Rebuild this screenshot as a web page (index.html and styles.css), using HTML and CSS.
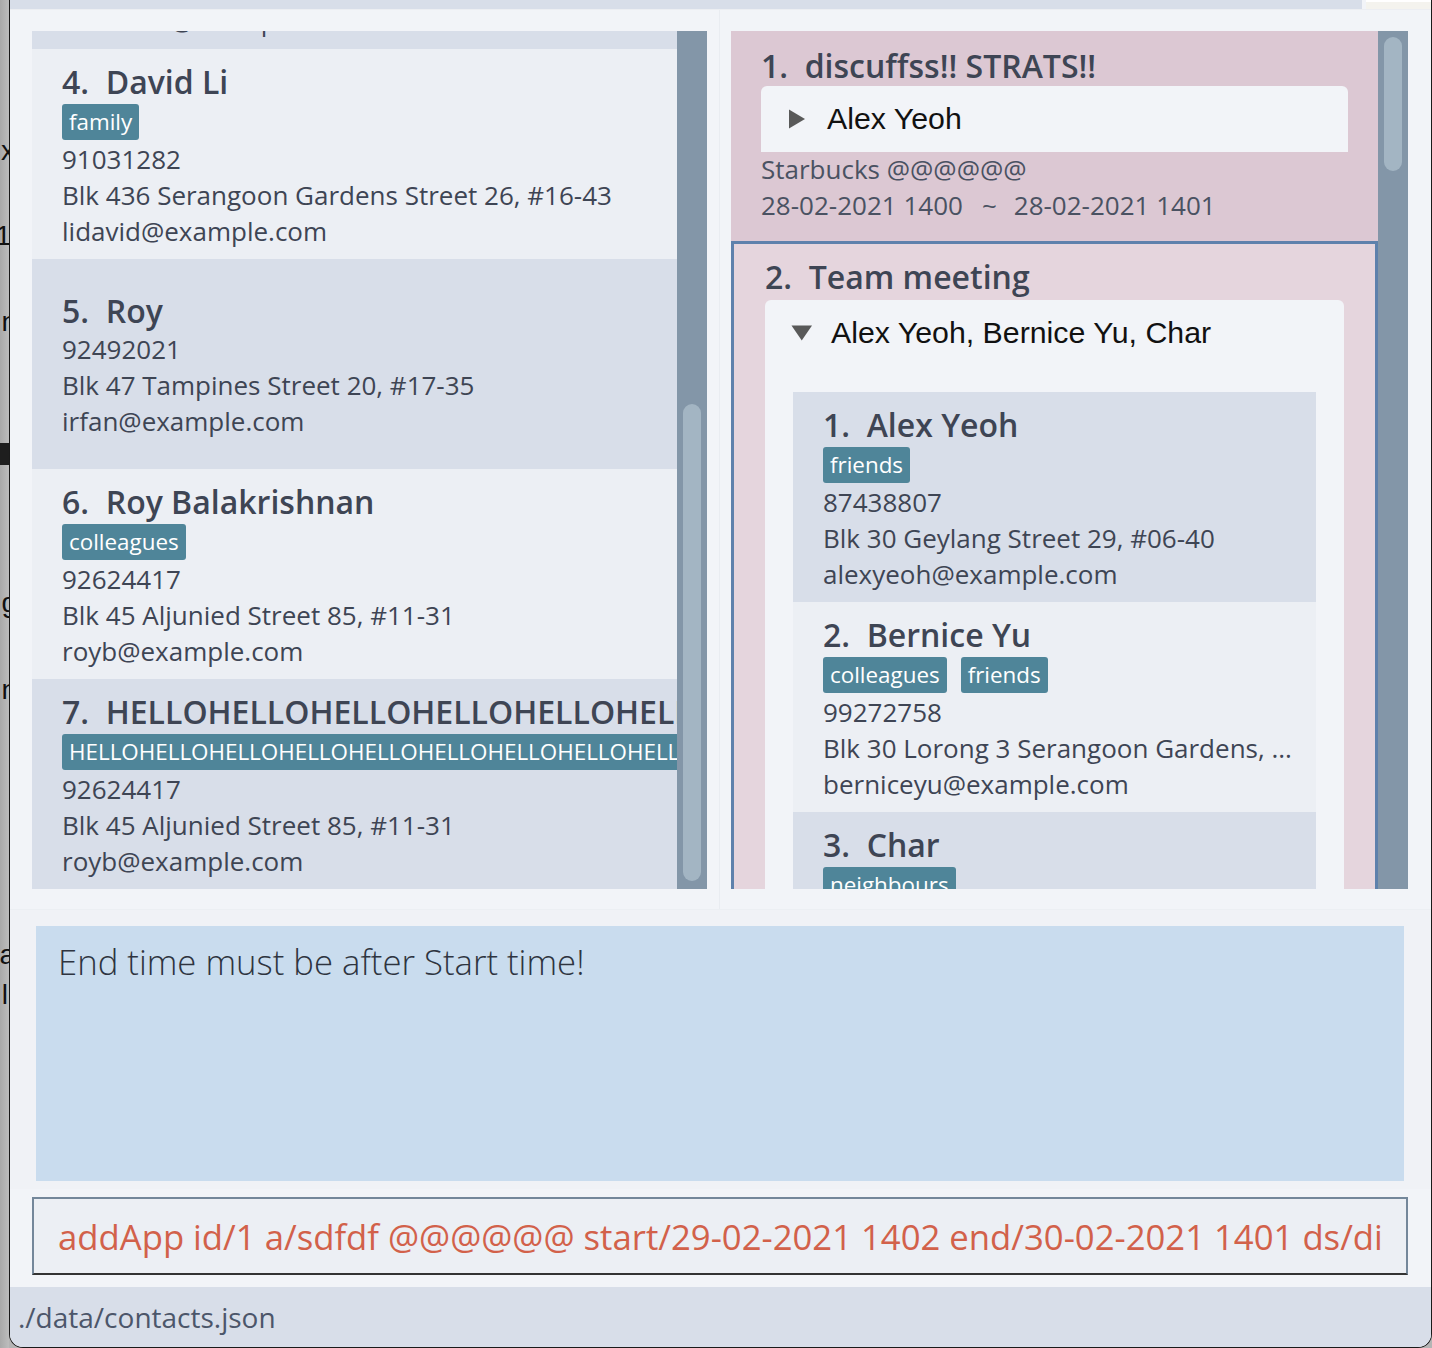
FILE: index.html
```html
<!DOCTYPE html>
<html lang="en">
<head>
<meta charset="utf-8">
<title>Address Book</title>
<link rel="stylesheet" href="styles.css">
</head>
<body>
<div class="desktop">
  <div class="backdrop">
    <span class="frag frag-x">x</span>
    <span class="frag frag-1">1</span>
    <span class="frag frag-n1">n</span>
    <span class="frag-block"></span>
    <span class="frag frag-g">g</span>
    <span class="frag frag-n2">n</span>
    <span class="frag frag-a">a</span>
    <span class="frag frag-l">l</span>
  </div>
  <div class="window">
    <div class="topbar">
      <div class="topbar-main"></div>
      <div class="topbar-side"></div>
    </div>

    <div class="main">
      <div class="col col-left">
        <div class="list">
          <div class="list-viewport">
            <div class="list-items scrolled">
              <div class="card card-dark">
                <div class="title">3.  Charlotte Oliveiro</div>
                <div class="tags"><span class="tag">neighbours</span></div>
                <div class="line">93210283</div>
                <div class="line">Blk 11 Ang Mo Kio Street 74, #11-04</div>
                <div class="line">charlotte@example.com</div>
              </div>
              <div class="card card-light">
                <div class="title">4.  David Li</div>
                <div class="tags"><span class="tag">family</span></div>
                <div class="line">91031282</div>
                <div class="line">Blk 436 Serangoon Gardens Street 26, #16-43</div>
                <div class="line">lidavid@example.com</div>
              </div>
              <div class="card card-dark">
                <div class="title">5.  Roy</div>
                <div class="line">92492021</div>
                <div class="line">Blk 47 Tampines Street 20, #17-35</div>
                <div class="line">irfan@example.com</div>
              </div>
              <div class="card card-light">
                <div class="title">6.  Roy Balakrishnan</div>
                <div class="tags"><span class="tag">colleagues</span></div>
                <div class="line">92624417</div>
                <div class="line">Blk 45 Aljunied Street 85, #11-31</div>
                <div class="line">royb@example.com</div>
              </div>
              <div class="card card-dark">
                <div class="title">7.  HELLOHELLOHELLOHELLOHELLOHELLOHELLO</div>
                <div class="tags"><span class="tag">HELLOHELLOHELLOHELLOHELLOHELLOHELLOHELLOHELLOHELLO</span></div>
                <div class="line">92624417</div>
                <div class="line">Blk 45 Aljunied Street 85, #11-31</div>
                <div class="line">royb@example.com</div>
              </div>
            </div>
          </div>
          <div class="scrollbar"><div class="thumb thumb-left"></div></div>
        </div>
      </div>

      <div class="col col-right">
        <div class="list">
          <div class="list-viewport">
            <div class="list-items">
              <div class="appt appt-first">
                <div class="title">1.  discuffss!! STRATS!!</div>
                <div class="pane">
                  <div class="pane-head">
                    <span class="arrow"><svg width="20" height="20" viewBox="0 0 20 20"><polygon points="2,0.5 18,10 2,19.5" fill="#595959"/></svg></span>
                    <span class="pane-title">Alex Yeoh</span>
                  </div>
                </div>
                <div class="line">Starbucks @@@@@@</div>
                <div class="line"><span>28-02-2021 1400</span><span class="tilde">~</span><span>28-02-2021 1401</span></div>
              </div>
              <div class="appt appt-selected">
                <div class="title">2.  Team meeting</div>
                <div class="pane pane-open">
                  <div class="pane-head">
                    <span class="arrow"><svg width="22" height="20" viewBox="0 0 22 20"><polygon points="0.5,2.5 21,2.5 10.75,17.5" fill="#595959"/></svg></span>
                    <span class="pane-title">Alex Yeoh, Bernice Yu, Char</span>
                  </div>
                  <div class="pane-body">
                    <div class="card card-dark">
                      <div class="title">1.  Alex Yeoh</div>
                      <div class="tags"><span class="tag">friends</span></div>
                      <div class="line">87438807</div>
                      <div class="line">Blk 30 Geylang Street 29, #06-40</div>
                      <div class="line">alexyeoh@example.com</div>
                    </div>
                    <div class="card card-light">
                      <div class="title">2.  Bernice Yu</div>
                      <div class="tags"><span class="tag">colleagues</span><span class="tag">friends</span></div>
                      <div class="line">99272758</div>
                      <div class="line">Blk 30 Lorong 3 Serangoon Gardens, ...</div>
                      <div class="line">berniceyu@example.com</div>
                    </div>
                    <div class="card card-dark">
                      <div class="title">3.  Char</div>
                      <div class="tags"><span class="tag">neighbours</span></div>
                      <div class="line">93210283</div>
                      <div class="line">Blk 11 Ang Mo Kio Street 74, #11-04</div>
                      <div class="line">charlotte@example.com</div>
                    </div>
                  </div>
                </div>
              </div>
            </div>
          </div>
          <div class="scrollbar"><div class="thumb thumb-right"></div></div>
        </div>
      </div>
    </div>

    <div class="result-area">
      <div class="result-box">End time must be after Start time!</div>
    </div>

    <div class="command-area">
      <div class="command-box">addApp id/1 a/sdfdf @@@@@@ start/29-02-2021 1402 end/30-02-2021 1401 ds/di</div>
    </div>

    <div class="status">./data/contacts.json</div>
  </div>
</div>
</body>
</html>
```
FILE: styles.css
```css
* { box-sizing: border-box; }

html, body {
  margin: 0;
  padding: 0;
}

body {
  width: 1432px;
  height: 1348px;
  overflow: hidden;
  background: #b4b4b4;
  font-family: "Open Sans", "Noto Sans", sans-serif;
}

.desktop {
  display: flex;
  width: 1432px;
  height: 1348px;
}

/* background of the desktop behind the window */
.backdrop {
  position: relative;
  width: 9px;
  flex: none;
  overflow: hidden;
  background: linear-gradient(90deg, #a9a9a9, #bdbdbd);
}

.frag {
  position: absolute;
  right: 0;
  font-family: "Liberation Sans", sans-serif;
  font-size: 28px;
  line-height: 30px;
  color: #111;
}
.frag-x { top: 136px; right: -6px; }
.frag-1 { top: 221px; right: -2px; }
.frag-n1 { top: 307px; right: -8px; }
.frag-g { top: 588px; right: -8px; }
.frag-n2 { top: 675px; right: -8px; }
.frag-a { top: 940px; right: -6px; }
.frag-l { top: 980px; right: 1px; }
.frag-block {
  position: absolute;
  left: 0;
  right: 0;
  top: 443px;
  height: 22px;
  background: #1e1e1e;
}

.window {
  flex: 1;
  display: flex;
  flex-direction: column;
  background: #f2f4f8;
  border: 1px solid #1a1a1a;
  border-top: none;
  border-radius: 0 0 14px 14px;
  overflow: hidden;
}

/* top strip */
.topbar {
  display: flex;
  height: 10px;
  flex: none;
  border-bottom: 1px solid #eceef2;
}
.topbar-main {
  width: 1352px;
  background: #d8dee9;
}
.topbar-side {
  margin-left: 4px;
  flex: 1;
  border-top: 2px solid #ffffff;
  background: #f4f3ee;
}

/* main split */
.main {
  display: grid;
  grid-template-columns: 710px 1fr;
  grid-template-rows: 899px;
  height: 899px;
  flex: none;
  overflow: hidden;
}

.col {
  min-height: 0;
  overflow: hidden;
}
.col-left {
  padding: 21px 12px 20px 22px;
  border-right: 1px solid #e9ecf1;
}
.col-right {
  padding: 21px 23px 20px 11px;
}

.list {
  display: flex;
  height: 858px;
  overflow: hidden;
}
.list-viewport {
  flex: 1;
  overflow: hidden;
}
.list-items {
  display: flex;
  flex-direction: column;
}
.scrolled {
  margin-top: -192px;
}

.scrollbar {
  width: 30px;
  flex: none;
  background: #8396a8;
  padding: 0 6px;
}
.thumb {
  background: #a3b5c3;
  border-radius: 9px;
}
.thumb-left {
  margin-top: 373px;
  height: 477px;
}
.thumb-right {
  margin-top: 6px;
  height: 134px;
}

/* person cards */
.card {
  height: 210px;
  flex: none;
  padding: 0 30px;
  display: flex;
  flex-direction: column;
  justify-content: center;
  overflow: hidden;
  color: #3e4554;
}
.card-dark { background: #d8dee9; }
.card-light { background: #eceff4; }

.title {
  font-size: 32px;
  font-weight: 600;
  line-height: 40px;
  white-space: pre;
  color: #3e4554;
}
.card .title {
  margin-top: 2px;
}

.tags {
  display: flex;
  gap: 14px;
  height: 36px;
  margin: 2px 0 1px;
  flex: none;
}
.tag {
  background: #4f8599;
  color: #ffffff;
  font-size: 22.4px;
  line-height: 36px;
  padding: 0 7px;
  border-radius: 3px;
  white-space: nowrap;
}

.line {
  font-size: 26px;
  line-height: 36px;
  white-space: pre;
  color: #3e4554;
}
.tilde {
  padding: 0 17px 0 19px;
}

/* appointment cards */
.appt {
  flex: none;
  color: #3e4554;
}
.appt-first {
  height: 210px;
  padding: 14px 30px 18px;
  background: #dcc8d3;
}
.appt-first .title {
  margin-top: 1px;
  margin-bottom: -1px;
}
.appt-first .pane {
  margin-top: 1px;
  margin-bottom: -1px;
}
.appt-first .line {
  color: #4a5262;
}
.appt-selected {
  height: 900px;
  padding: 13px 31px 0;
  background: #e5d5dd;
  border: 3px solid #5e81ac;
}

.pane {
  background: #f2f4f8;
  border-radius: 6px 6px 0 0;
}
.pane-open {
  margin-top: 3px;
}
.pane-head {
  display: flex;
  align-items: center;
  height: 66px;
  padding-left: 26px;
}
.arrow {
  width: 22px;
  height: 20px;
  margin-right: 18px;
  display: flex;
}
.pane-title {
  font-family: "Liberation Sans", Arial, sans-serif;
  font-size: 30.3px;
  color: #111111;
  white-space: nowrap;
}
.pane-body {
  padding: 26px 28px 0;
}

/* command result */
.result-area {
  flex: none;
  height: 280px;
  padding: 16px 27px 8px 26px;
  border-top: 1px solid #eceff3;
  background: #f0f2f6;
}
.result-box {
  height: 100%;
  background: #c9dcee;
  padding: 11px 22px;
  font-size: 34.7px;
  font-weight: 300;
  line-height: 49px;
  color: #2e3440;
}

/* command box */
.command-area {
  flex: none;
  height: 98px;
  padding: 8px 23px 12px 22px;
}
.command-box {
  height: 100%;
  background: #eceff4;
  border: 2px solid #74879a;
  border-bottom-color: #333333;
  padding: 0 24px;
  display: flex;
  align-items: center;
  font-size: 34.7px;
  color: #d2614a;
  white-space: nowrap;
  overflow: hidden;
}

/* status bar */
.status {
  flex: 1;
  background: #d8dee9;
  padding: 0 8px;
  display: flex;
  align-items: center;
  font-size: 28px;
  color: #4c566a;
}
```
